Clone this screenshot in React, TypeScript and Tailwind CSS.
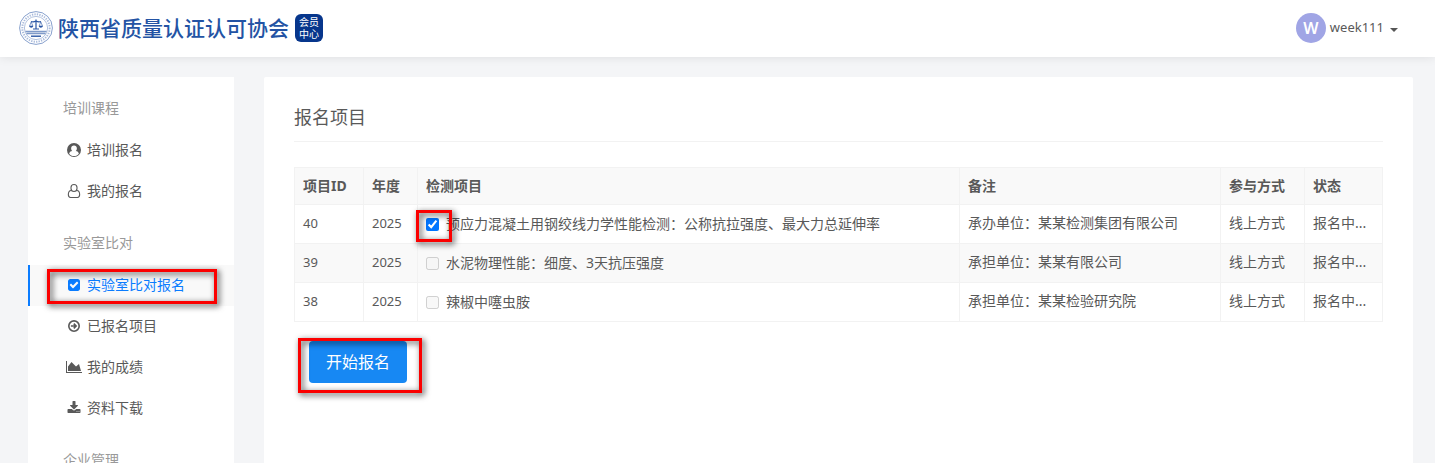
import { ReactNode } from 'react';

type IconProps = { className?: string };

const UserCircle = ({ className }: IconProps) => (
  <svg viewBox="0 0 1792 1792" fill="currentColor" className={className}>
    <path
      fillRule="evenodd"
      d="M896 0a896 896 0 1 1 0 1792a896 896 0 1 1 0-1792zM896 330c-220 0-370 160-370 380 0 140 50 250 140 320-220 30-350 150-390 340 140 190 360 300 620 300s480-110 620-300c-40-190-170-310-390-340 90-70 140-180 140-320 0-220-150-380-370-380z"
    />
  </svg>
);

const UserOutline = ({ className }: IconProps) => (
  <svg viewBox="0 0 1792 1792" fill="none" stroke="currentColor" strokeWidth="140" className={className}>
    <path d="M896 70c-212 0-384 172-384 384v128c0 212 172 384 384 384s384-172 384-384V454c0-212-172-384-384-384z" />
    <path d="M540 826c-220 10-368 190-368 530 0 210 110 366 280 366h888c170 0 280-156 280-366 0-340-148-520-368-530" />
  </svg>
);

const CheckSquare = ({ className }: IconProps) => (
  <svg viewBox="0 0 1792 1792" fill="currentColor" className={className}>
    <path d="M813 1299l614-614q19-19 19-45t-19-45l-102-102q-19-19-45-19t-45 19l-467 467-211-211q-19-19-45-19t-45 19l-102 102q-19 19-19 45t19 45l358 358q19 19 45 19t45-19zm851-883v960q0 119-84.5 203.500t-203.500 84.500h-960q-119 0-203.500-84.500t-84.500-203.500v-960q0-119 84.500-203.500t203.500-84.500h960q119 0 203.500 84.500t84.500 203.500z" />
  </svg>
);

const ArrowCircle = ({ className }: IconProps) => (
  <svg viewBox="0 0 1792 1792" fill="currentColor" className={className}>
    <circle cx="896" cy="896" r="664" fill="none" stroke="currentColor" strokeWidth="208" />
    <path d="M1310 896l-370 370-140-140 110-120H500V786h410L800 666l140-140z" />
  </svg>
);

const AreaChart = ({ className }: IconProps) => (
  <svg viewBox="0 0 2048 1792" fill="currentColor" className={className}>
    <path d="M2048 1536v128h-2048v-1536h128v1408h1920zm-384-1024l256 896h-1664v-576l448-576 576 576z" />
  </svg>
);

const Download = ({ className }: IconProps) => (
  <svg viewBox="0 0 1792 1792" fill="currentColor" className={className}>
    <path d="M1344 1344q0-26-19-45t-45-19-45 19-19 45 19 45 45 19 45-19 19-45zm256 0q0-26-19-45t-45-19-45 19-19 45 19 45 45 19 45-19 19-45zm128-224v320q0 40-28 68t-68 28h-1472q-40 0-68-28t-28-68v-320q0-40 28-68t68-28h465l135 136q58 56 136 56t136-56l136-136h464q40 0 68 28t28 68zm-325-569q17 41-14 70l-448 448q-18 19-45 19t-45-19l-448-448q-31-29-14-70 17-39 59-39h256v-448q0-26 19-45t45-19h256q26 0 45 19t19 45v448h256q42 0 59 39z" />
  </svg>
);

const Emblem = () => (
  <svg viewBox="0 0 34 34" className="h-[34px] w-[34px]" fill="none" stroke="#2a56a5">
    <circle cx="17" cy="17" r="16.400" strokeWidth="0.700" opacity="0.800" />
    <circle cx="17" cy="17" r="13.700" strokeWidth="2" strokeDasharray="1.300 1.200" opacity="0.400" />
    <circle cx="17" cy="17" r="11.600" strokeWidth="0.600" opacity="0.600" />
    <path d="M17 8.500v9M12 10.500q2.500 1 5-.5 2.500 1.500 5 .5M14 18h6" strokeWidth="1.200" />
    <path d="M10.500 15l1.700-4 1.700 4zM20.100 15l1.700-4 1.700 4z" strokeWidth="0.600" />
    <path d="M10 15h4.400q-.6 1.800-2.200 1.800T10 15zM19.600 15H24q-.6 1.800-2.200 1.800T19.600 15z" fill="#2a56a5" stroke="none" />
    <path d="M6.500 20.500h21M7.500 22.500h19" strokeWidth="1.400" opacity="0.600" />
    <path d="M12 25.200h10" strokeWidth="1.400" />
  </svg>
);

const Highlight = ({ className }: IconProps) => (
  <span
    className={`pointer-events-none absolute z-10 border-3 border-[#fb0000] drop-shadow-[2px_2px_3px_rgba(0,0,0,0.800)] ${className}`}
  />
);

type MenuItem = { label: string; icon: (props: IconProps) => ReactNode; size: string; active?: boolean };

const menu: { title: string; items: MenuItem[] }[] = [
  {
    title: '培训课程',
    items: [
      { label: '培训报名', icon: UserCircle, size: 'size-[14px]' },
      { label: '我的报名', icon: UserOutline, size: 'size-[14px]' },
    ],
  },
  {
    title: '实验室比对',
    items: [
      { label: '实验室比对报名', icon: CheckSquare, size: 'size-[14px]', active: true },
      { label: '已报名项目', icon: ArrowCircle, size: 'size-[14px]' },
      { label: '我的成绩', icon: AreaChart, size: 'h-[14px] w-4' },
      { label: '资料下载', icon: Download, size: 'size-[14px]' },
    ],
  },
  { title: '企业管理', items: [] },
];

const projects = [
  {
    id: 40,
    year: 2025,
    name: '预应力混凝土用钢绞线力学性能检测：公称抗拉强度、最大力总延伸率',
    remark: '承办单位：某某检测集团有限公司',
    checked: true,
  },
  { id: 39, year: 2025, name: '水泥物理性能：细度、3天抗压强度', remark: '承担单位：某某有限公司' },
  { id: 38, year: 2025, name: '辣椒中噻虫胺', remark: '承担单位：某某检验研究院' },
];

const columns = [
  { title: '项目ID', width: 'w-[69px]' },
  { title: '年度', width: 'w-[54px]' },
  { title: '检测项目', width: '' },
  { title: '备注', width: 'w-[261px]' },
  { title: '参与方式', width: 'w-[84px]' },
  { title: '状态', width: 'w-[78px]' },
];

const cell = 'border border-[#f2f2f2] px-2';

const Header = () => (
  <header className="relative flex h-[57px] shrink-0 items-center justify-between bg-white pr-[37px] pb-0.5 pl-[19px] shadow-[0_0_10px_rgba(0,0,0,0.100)]">
    <a href="#" className="flex items-center">
      <Emblem />
      <span className="ml-[5px] text-[21px] font-medium text-[#2353a4]">陕西省质量认证认可协会</span>
      <span className="ml-1.5 flex h-7 w-7 flex-col items-center justify-center rounded-md bg-[#07368c] text-[10px] leading-3 text-white">
        <span>会员</span>
        <span>中心</span>
      </span>
    </a>
    <button className="flex items-center">
      <span className="flex size-[30px] items-center justify-center rounded-full bg-[#a0a5e5] text-base font-semibold text-white">
        W
      </span>
      <span className="ml-1 text-[13px]">week111</span>
      <span className="mt-1 ml-1.5 border-x-4 border-t-4 border-x-transparent border-t-[#555]" />
    </button>
  </header>
);

const Sidebar = () => (
  <nav className="w-[206px] shrink-0 bg-white">
    {menu.map((group) => (
      <section key={group.title}>
        <h2 className="h-[53px] pt-5 pl-[35px] leading-[21px] text-[#999]">{group.title}</h2>
        {group.items.map(({ label, icon: Icon, size, active }) => (
          <a
            key={label}
            href="#"
            className={`relative flex h-[41px] items-center border-l-2 pb-0.5 pl-9 ${
              active ? 'border-[#0a7cff] bg-[#f9f9f9] text-[#0a7cff]' : 'border-transparent'
            }`}
          >
            <span className="flex w-4 justify-center">
              <Icon className={size} />
            </span>
            <span className="ml-[5px]">{label}</span>
            {active && <Highlight className="top-1 left-[17px] h-[35px] w-[170px]" />}
          </a>
        ))}
      </section>
    ))}
  </nav>
);

const ProjectTable = () => (
  <table className="mt-[25px] w-full table-fixed border-collapse text-left">
    <thead>
      <tr className="h-[37px] bg-[#f9f9f9]">
        {columns.map((col) => (
          <th key={col.title} className={`${cell} ${col.width} font-bold`}>
            {col.title}
          </th>
        ))}
      </tr>
    </thead>
    <tbody>
      {projects.map((p) => (
        <tr key={p.id} className="h-[39px] even:bg-[#f9f9f9]">
          <td className={`${cell} pb-0.5 text-[13px]`}>{p.id}</td>
          <td className={`${cell} pb-0.5 text-[13px]`}>{p.year}</td>
          <td className={cell}>
            <div className="relative flex items-center">
              <input
                id={`project-${p.id}`}
                type="checkbox"
                defaultChecked={p.checked}
                disabled={!p.checked}
                className="size-[13px] accent-[#0075ff]"
              />
              <label htmlFor={`project-${p.id}`} className="ml-[7px] truncate">
                {p.name}
              </label>
              {p.checked && <Highlight className="-top-1 -left-2.5 h-8 w-9" />}
            </div>
          </td>
          <td className={`${cell} pb-0.5`}>{p.remark}</td>
          <td className={`${cell} pb-0.5`}>线上方式</td>
          <td className={`${cell} pb-0.5`}>报名中...</td>
        </tr>
      ))}
    </tbody>
  </table>
);

const App = () => (
  <div className="flex h-screen flex-col overflow-hidden bg-[#f4f5f7] font-['Noto_Sans','Noto_Sans_CJK_SC',sans-serif] text-sm text-[#595959]">
    <Header />
    <div className="flex flex-1 gap-[30px] pt-5 pr-[22px] pl-7">
      <Sidebar />
      <main className="min-w-0 flex-1 rounded-xs bg-white px-[30px] pt-[26px]">
        <h1 className="border-b border-[#f2f2f2] pb-2.5 text-lg">报名项目</h1>
        <ProjectTable />
        <div className="relative mt-[19px] ml-[15px] w-fit">
          <button className="h-[42px] rounded bg-[#1788f3] px-[17px] text-base text-white">开始报名</button>
          <Highlight className="-top-[3px] -left-[11px] h-[55px] w-[124px]" />
        </div>
      </main>
    </div>
  </div>
);

export default App;
